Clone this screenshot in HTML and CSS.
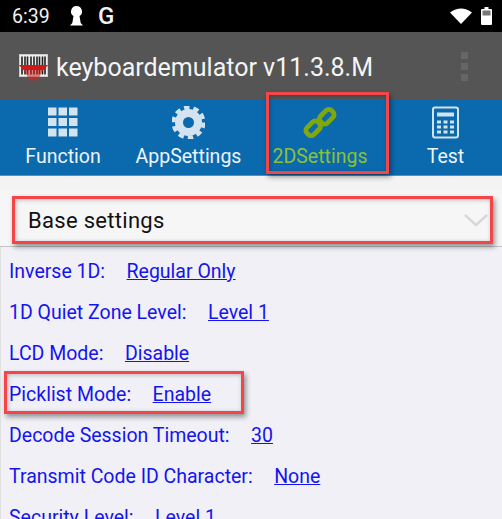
FILE: index.html
```html
<!DOCTYPE html>
<html lang="en">
<head>
  <meta charset="UTF-8" />
  <meta name="viewport" content="width=device-width, initial-scale=1.0"/>
  <title>keyboardemulator</title>
  <link rel="stylesheet" href="styles.css">
</head>
<body>
  <div class="phone">
    <div class="status-bar">
      <span class="clock">6:39</span>
      <svg class="keyhole" width="13" height="20" viewBox="0 0 13 20"><path d="M6.500 0a5.500 5.500 0 0 1 3 10.100l1.200 6.900 2.300 2.500H0l2.300-2.500 1.200-6.900a5.500 5.500 0 0 1 3-10.100z" fill="#fff"/></svg>
      <span class="g-mark">G</span>
      <span class="status-right">
        <svg width="22" height="16" viewBox="0 0 22 16"><path d="M0 4.500Q11-3.500 22 4.500L11 16z" fill="#fff"/></svg>
        <svg width="11" height="18" viewBox="0 0 11 18"><path d="M3.500 0h4v2H10a1 1 0 0 1 1 1v14a1 1 0 0 1-1 1H1a1 1 0 0 1-1-1V3a1 1 0 0 1 1-1h2.500z" fill="#fff"/><rect x="1.500" y="3.500" width="8" height="5" fill="#777"/></svg>
      </span>
    </div>

    <div class="app-bar">
      <svg class="app-logo" width="30" height="28" viewBox="0 0 30 28">
        <rect x="0.500" y="0.500" width="28" height="22" fill="#eee" stroke="#ccc"/>
        <path d="M3 2.500v18M6 2.500v18M8.500 2.500v18M12 2.500v18M15 2.500v18M18 2.500v18M20.500 2.500v18M23.500 2.500v18M26 2.500v18" stroke="#222" stroke-width="1.600"/>
        <path d="M0 11h29l-7 8.500-3 7h-9l-3-7z" fill="#d8201f" opacity="0.55"/>
        <path d="M0 11h29l-5 5H5z" fill="#d01818"/>
      </svg>
      <span class="app-title">keyboardemulator v11.3.8.M</span>
      <span class="overflow-menu"><i></i><i></i><i></i></span>
    </div>

    <div class="tabs">
      <div class="tab tab-function">
        <svg width="30" height="30" viewBox="0 0 30 30" fill="#d3e3f0">
          <rect x="0" y="0" width="8.500" height="8"/><rect x="10.500" y="0" width="8.500" height="8"/><rect x="21" y="0" width="8.500" height="8"/>
          <rect x="0" y="10.500" width="8.500" height="8"/><rect x="10.500" y="10.500" width="8.500" height="8"/><rect x="21" y="10.500" width="8.500" height="8"/>
          <rect x="0" y="21" width="8.500" height="8"/><rect x="10.500" y="21" width="8.500" height="8"/><rect x="21" y="21" width="8.500" height="8"/>
        </svg>
        <span>Function</span>
      </div>
      <div class="tab tab-app">
        <svg width="33" height="33" viewBox="0 0 33 33">
          <circle cx="16.500" cy="16.500" r="9.500" fill="none" stroke="#d3e3f0" stroke-width="8"/>
          <circle cx="16.500" cy="16.500" r="15" fill="none" stroke="#d3e3f0" stroke-width="4" stroke-dasharray="5.400 4"/>
        </svg>
        <span>AppSettings</span>
      </div>
      <div class="tab tab-2d">
        <svg width="34" height="34" viewBox="0 0 34 34" fill="none" stroke="#7fa80e" stroke-width="5">
          <rect x="-8" y="-5" width="16" height="10" rx="4" transform="translate(10 23) rotate(-45)"/>
          <rect x="-8" y="-5" width="16" height="10" rx="4" transform="translate(24 11) rotate(-45)"/>
        </svg>
        <span>2DSettings</span>
      </div>
      <div class="tab tab-test">
        <svg width="27" height="32" viewBox="0 0 27 32">
          <rect x="1" y="1" width="25" height="30" rx="2" fill="none" stroke="#d3e3f0" stroke-width="2"/>
          <rect x="5" y="6" width="17" height="4" fill="#d3e3f0"/>
          <path d="M5 14h4v3H5zM11.500 14h4v3h-4zM18 14h4v3h-4zM5 19h4v3H5zM11.500 19h4v3h-4zM18 19h4v3h-4zM5 24h4v3H5zM11.500 24h4v3h-4zM18 24h4v3h-4z" fill="#d3e3f0"/>
        </svg>
        <span>Test</span>
      </div>
    </div>

    <div class="gap-strip"></div>

    <div class="spinner">
      <span>Base settings</span>
      <svg width="24" height="13" viewBox="0 0 24 13"><path d="M1 1l11 10 11-10" fill="none" stroke="#d8d8d8" stroke-width="2.500"/></svg>
    </div>

    <div class="settings">
      <div class="row"><span>Inverse 1D:</span><a href="#">Regular Only</a></div>
      <div class="row"><span>1D Quiet Zone Level:</span><a href="#">Level 1</a></div>
      <div class="row"><span>LCD Mode:</span><a href="#">Disable</a></div>
      <div class="row"><span>Picklist Mode:</span><a href="#">Enable</a></div>
      <div class="row"><span>Decode Session Timeout:</span><a href="#">30</a></div>
      <div class="row"><span>Transmit Code ID Character:</span><a href="#">None</a></div>
      <div class="row"><span>Security Level:</span><a href="#">Level 1</a></div>
    </div>

    <div class="callout callout-tab"></div>
    <div class="callout callout-spinner"></div>
    <div class="callout callout-picklist"></div>
  </div>
</body>
</html>
```

FILE: styles.css
```css
html, body {
  margin: 0;
  padding: 0;
  height: 100%;
  overflow: hidden;
}

.phone {
  position: relative;
  width: 502px;
  height: 519px;
  overflow: hidden;
  font-family: Roboto, sans-serif;
  background-color: #f0f0f6;
}

.status-bar {
  height: 32px;
  background-color: #000;
  color: #f2f2f2;
  display: flex;
  align-items: center;
  padding: 0 10px 0 12px;
  box-sizing: border-box;
}

.clock {
  font-size: 19.500px;
  width: 58px;
}

.keyhole {
  margin-right: 15px;
}

.g-mark {
  font-size: 24px;
  font-weight: 500;
}

.status-right {
  margin-left: auto;
  display: flex;
  align-items: center;
  gap: 9px;
}

.app-bar {
  height: 68px;
  background-color: #555;
  display: flex;
  align-items: center;
  padding: 0 34px 0 19px;
  box-sizing: border-box;
}

.app-logo {
  margin-right: 7px;
  margin-top: 4px;
}

.app-title {
  color: #f4f4f4;
  font-size: 25px;
  margin-top: 2px;
}

.overflow-menu {
  margin-left: auto;
  display: flex;
  flex-direction: column;
  gap: 4px;
}

.overflow-menu i {
  width: 7px;
  height: 7px;
  background-color: #666;
}

.tabs {
  height: 76px;
  background-color: #0b69ae;
  display: flex;
  border-bottom: 1px solid #4d94c6;
  box-sizing: border-box;
}

.tab {
  display: flex;
  flex-direction: column;
  align-items: center;
  color: #eef4f9;
  font-size: 19.500px;
}

.tab svg {
  height: 33px;
  margin-top: 6px;
}

.tab span {
  margin-top: 6px;
}

.tab-function {
  width: 126px;
}

.tab-app {
  width: 125px;
}

.tab-2d {
  width: 138px;
  color: #8cc135;
}

.tab-test {
  width: 113px;
}

.gap-strip {
  height: 14px;
  background-color: #f3f3f3;
}

.spinner {
  height: 57px;
  box-sizing: border-box;
  background-color: #f6f6f6;
  border-bottom: 1px solid #c4c4c4;
  display: flex;
  align-items: center;
  justify-content: space-between;
  padding: 5px 14px 0 28px;
  font-size: 22px;
  color: #111;
  letter-spacing: 0.3px;
}

.settings {
  padding: 4px 0 0 8px;
  border-left: 1px solid #e0e0e0;
}

.row {
  height: 41px;
  line-height: 41px;
  font-size: 19.500px;
  color: #1414f0;
  white-space: nowrap;
}

.row a {
  color: #1414f0;
  margin-left: 21.500px;
}

.callout {
  position: absolute;
  border: 3px solid #f44648;
  box-sizing: border-box;
  box-shadow: 2px 3px 5px rgba(0, 0, 0, 0.4), inset 1px 1px 4px rgba(0, 0, 0, 0.25);
}

.callout-tab {
  left: 266px;
  top: 92px;
  width: 123px;
  height: 82px;
}

.callout-spinner {
  left: 12px;
  top: 196px;
  width: 481px;
  height: 48px;
}

.callout-picklist {
  left: 4px;
  top: 371px;
  width: 240px;
  height: 43px;
}
```
